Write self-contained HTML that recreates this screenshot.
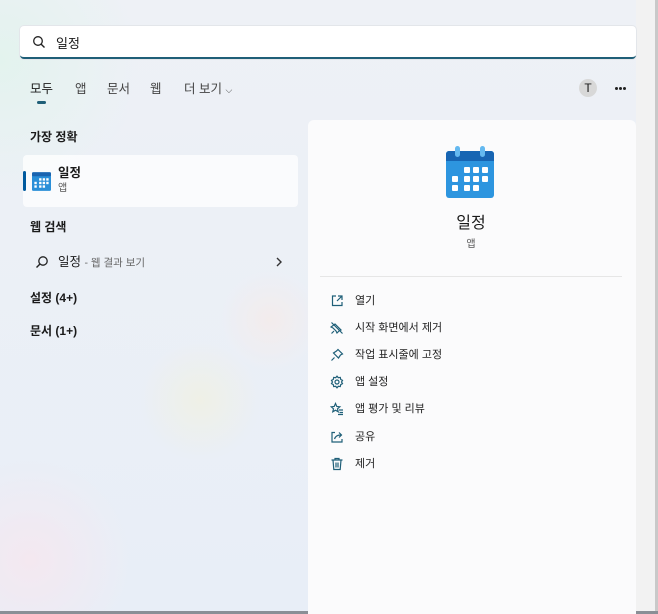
<!DOCTYPE html>
<html><head><meta charset="utf-8"><style>
*{margin:0;padding:0;box-sizing:border-box}
body{width:658px;height:614px;overflow:hidden;position:relative;font-family:"Liberation Sans","Noto Sans CJK KR","NanumGothic",sans-serif;color:#1a1a1a;
background:radial-gradient(circle at 0px 60px,#e3f3ee 0,rgba(227,243,238,0) 140px),radial-gradient(circle at 30px 560px,#f4e8f0 0,rgba(244,232,240,0) 100px),radial-gradient(circle at 270px 320px,#f3ecec 0,rgba(243,236,236,0) 50px),radial-gradient(circle at 200px 400px,#eff0e6 0,rgba(239,240,230,0) 60px),linear-gradient(180deg,#eef1f6,#e8eef7);}
.a{position:absolute;white-space:nowrap;line-height:1}
.search{left:20px;top:26px;width:616px;height:33px;background:#fff;border-radius:4px;border-bottom:2px solid #1f5f78;box-shadow:0 0 0 1px #e3e6ea}
.b{font-weight:bold;font-size:12px}
.panel{left:308px;top:120px;width:328px;height:494px;background:#fbfbfc;border-radius:6px 6px 0 0}
.act{left:355px;font-size:11px;color:#222}
.ic{left:330px;width:14px;height:14px}
.dot{position:absolute;top:87px;width:3px;height:3px;border-radius:50%;background:#222}
</style></head><body>
<div class="a" style="left:636px;top:0;width:19px;height:614px;background:#f2f2f2"></div>
<div class="a" style="left:655px;top:0;width:3px;height:614px;background:#c9c9c9"></div>
<div class="a" style="left:0;top:611px;width:658px;height:3px;background:#8a8f96"></div>
<div class="a search"></div>
<svg class="a" style="left:32px;top:35px" width="14" height="14" viewBox="0 0 14 14"><circle cx="6" cy="6" r="4.3" fill="none" stroke="#222" stroke-width="1.3"/><path d="M9.2 9.2L12.5 12.5" stroke="#222" stroke-width="1.4"/></svg>
<div class="a" style="left:56px;top:37px;font-size:13px">일정</div>
<div class="a" style="left:30px;top:83px;font-size:12.5px">모두</div>
<div class="a" style="left:37px;top:101px;width:9px;height:3px;border-radius:2px;background:#1f5f78"></div>
<div class="a" style="left:75px;top:83px;font-size:12.5px;color:#444">앱</div>
<div class="a" style="left:107px;top:83px;font-size:12.5px;color:#444">문서</div>
<div class="a" style="left:150px;top:83px;font-size:12.5px;color:#444">웹</div>
<div class="a" style="left:184px;top:83px;font-size:12.5px;color:#444">더 보기 <span style="font-size:9px">⌵</span></div>
<div class="a" style="left:579px;top:79px;width:18px;height:18px;border-radius:50%;background:#d8d8d8;font-size:12px;text-align:center;line-height:18px">T</div>
<div class="dot" style="left:615px"></div><div class="dot" style="left:619px"></div><div class="dot" style="left:623px"></div>
<div class="a b" style="left:30px;top:131px">가장 정확</div>
<div class="a" style="left:23px;top:155px;width:275px;height:52px;background:rgba(255,255,255,.75);border-radius:4px"></div>
<div class="a" style="left:23px;top:171px;width:3px;height:20px;border-radius:2px;background:#005a9e"></div>
<svg class="a" style="left:32px;top:171px" width="19" height="20" viewBox="0 0 48 50"><rect x="0" y="3" width="48" height="47" rx="3" fill="#2a8fd8"/><rect x="0" y="3" width="48" height="10" rx="3" fill="#1a64b0"/><g fill="#fff"><rect x="18" y="18" width="6" height="6"/><rect x="27" y="18" width="6" height="6"/><rect x="36" y="18" width="6" height="6"/><rect x="6" y="27" width="6" height="6"/><rect x="18" y="27" width="6" height="6"/><rect x="27" y="27" width="6" height="6"/><rect x="36" y="27" width="6" height="6"/><rect x="6" y="36" width="6" height="6"/><rect x="18" y="36" width="6" height="6"/><rect x="27" y="36" width="6" height="6"/></g></svg>
<div class="a b" style="left:58px;top:167px;font-size:12.5px">일정</div>
<div class="a" style="left:58px;top:184px;font-size:10px;color:#555">앱</div>
<div class="a b" style="left:30px;top:221px">웹 검색</div>
<svg class="a" style="left:35px;top:255px" width="14" height="14" viewBox="0 0 14 14"><circle cx="8" cy="6" r="4.2" fill="none" stroke="#222" stroke-width="1.3"/><path d="M5 9L1.5 12.5" stroke="#222" stroke-width="1.4"/></svg>
<div class="a" style="left:58px;top:256px;font-size:12.5px">일정 <span style="font-size:10.5px;color:#666">- 웹 결과 보기</span></div>
<svg class="a" style="left:275px;top:257px" width="8" height="10" viewBox="0 0 8 10"><path d="M2 1l4 4-4 4" fill="none" stroke="#333" stroke-width="1.4"/></svg>
<div class="a b" style="left:30px;top:292px">설정 (4+)</div>
<div class="a b" style="left:30px;top:325px">문서 (1+)</div>
<div class="a panel"></div>
<svg class="a" style="left:446px;top:146px" width="48" height="52" viewBox="0 0 48 52"><rect x="0" y="5" width="48" height="47" rx="3" fill="#2d95df"/><path d="M3 5h42a3 3 0 0 1 3 3v7H0V8a3 3 0 0 1 3-3z" fill="#1765b3"/><rect x="9" y="0" width="5" height="11" rx="2.5" fill="#64b9f0"/><rect x="34" y="0" width="5" height="11" rx="2.5" fill="#64b9f0"/><g fill="#fff"><rect x="18" y="21" width="6" height="6" rx="1"/><rect x="27" y="21" width="6" height="6" rx="1"/><rect x="36" y="21" width="6" height="6" rx="1"/><rect x="6" y="30" width="6" height="6" rx="1"/><rect x="18" y="30" width="6" height="6" rx="1"/><rect x="27" y="30" width="6" height="6" rx="1"/><rect x="36" y="30" width="6" height="6" rx="1"/><rect x="6" y="39" width="6" height="6" rx="1"/><rect x="18" y="39" width="6" height="6" rx="1"/><rect x="27" y="39" width="6" height="6" rx="1"/></g></svg>
<div class="a" style="left:420px;top:216px;width:102px;text-align:center;font-size:16px">일정</div>
<div class="a" style="left:420px;top:240px;width:102px;text-align:center;font-size:10px;color:#555">앱</div>
<div class="a" style="left:320px;top:276px;width:302px;height:1px;background:#e6e6e6"></div>
<svg class="a ic" style="top:294px" viewBox="0 0 14 14" fill="none" stroke="#1f5f78" stroke-width="1.2"><path d="M6 2H2.5v9.5H12V8"/><path d="M8 2h4v4M12 2L7 7"/></svg>
<div class="a act" style="top:296px">열기</div>
<svg class="a ic" style="top:321px" viewBox="0 0 14 14" fill="none" stroke="#1f5f78" stroke-width="1.2"><path d="M1.5 1.5l11 11M5 3l6 6-2 1-2 2-1-2-3-3-2-1zM4 10l-2.5 2.5"/></svg>
<div class="a act" style="top:323px">시작 화면에서 제거</div>
<svg class="a ic" style="top:348px" viewBox="0 0 14 14" fill="none" stroke="#1f5f78" stroke-width="1.2"><path d="M8 1.5l4.5 4.5-2 1-2 3-5-5 3-2zM4.5 9.5l-3 3"/></svg>
<div class="a act" style="top:350px">작업 표시줄에 고정</div>
<svg class="a ic" style="top:375px" viewBox="0 0 14 14" fill="none" stroke="#1f5f78" stroke-width="1.2"><circle cx="7" cy="7" r="2"/><path d="M7 1.2l1.3 1.5 2-.3.4 2 1.8 1-1 1.6 1 1.6-1.8 1-.4 2-2-.3L7 12.8 5.7 11.3l-2 .3-.4-2-1.8-1 1-1.6-1-1.6 1.8-1 .4-2 2 .3z"/></svg>
<div class="a act" style="top:377px">앱 설정</div>
<svg class="a ic" style="top:402px" viewBox="0 0 14 14" fill="none" stroke="#1f5f78" stroke-width="1.2"><path d="M5.5 1.5l1.3 3 3 .3-2.3 2 .7 3-2.7-1.6-2.7 1.6.7-3-2.3-2 3-.3zM9 8h4M9.5 10.5h3.5M8 12.5h5"/></svg>
<div class="a act" style="top:404px">앱 평가 및 리뷰</div>
<svg class="a ic" style="top:430px" viewBox="0 0 14 14" fill="none" stroke="#1f5f78" stroke-width="1.2"><path d="M5 2.5H2v9.5h10V9"/><path d="M4.5 9c1-3 3.5-4 6-4M9 2.5l2.5 2.5L9 7.5"/></svg>
<div class="a act" style="top:432px">공유</div>
<svg class="a ic" style="top:457px" viewBox="0 0 14 14" fill="none" stroke="#1f5f78" stroke-width="1.2"><path d="M1.5 3h11M5 3V1.5h4V3M3 3l.8 9.5h6.4L11 3M6 5.5v5M8 5.5v5"/></svg>
<div class="a act" style="top:459px">제거</div>
</body></html>
